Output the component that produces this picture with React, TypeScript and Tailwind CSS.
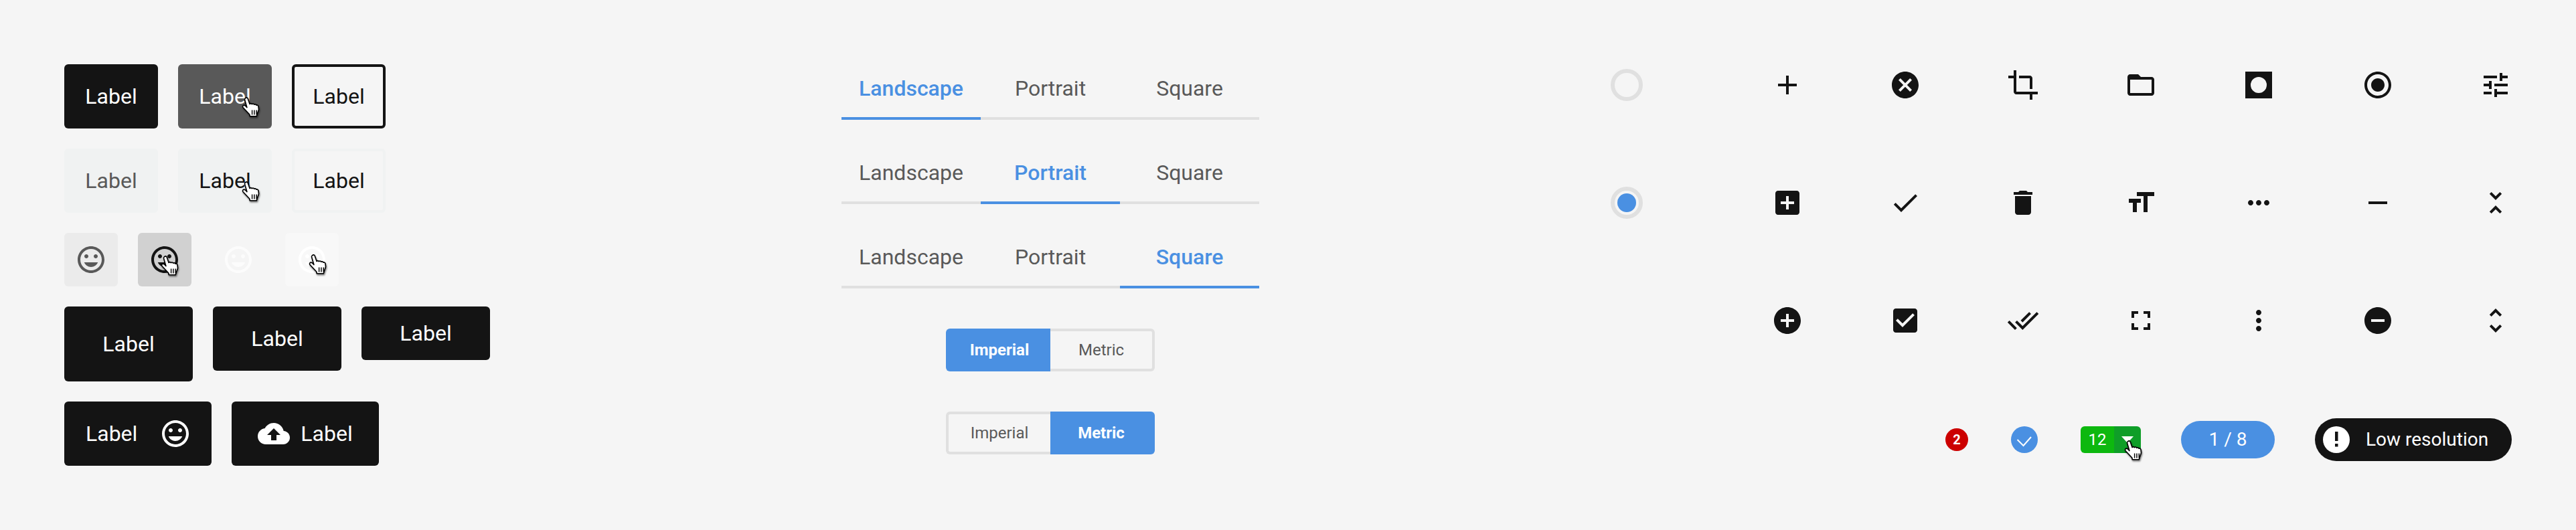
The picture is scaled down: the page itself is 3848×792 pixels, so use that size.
import React from "react";

const P = {
  mood: "M11.99 2C6.47 2 2 6.48 2 12s4.47 10 9.99 10C17.52 22 22 17.52 22 12S17.52 2 11.99 2zM12 20c-4.42 0-8-3.58-8-8s3.58-8 8-8 8 3.58 8 8-3.58 8-8 8zm3.5-9c.83 0 1.5-.67 1.5-1.5S16.33 8 15.5 8 14 8.67 14 9.5s.67 1.5 1.5 1.5zm-7 0c.83 0 1.5-.67 1.5-1.5S9.33 8 8.5 8 7 8.67 7 9.5 7.67 11 8.5 11zm3.5 6.5c2.33 0 4.31-1.46 5.11-3.5H6.89c.8 2.04 2.78 3.5 5.11 3.5z",
  upload: "M19.35 10.04C18.67 6.59 15.64 4 12 4 9.11 4 6.6 5.64 5.35 8.04 2.34 8.36 0 10.91 0 14c0 3.31 2.69 6 6 6h13c2.76 0 5-2.24 5-5 0-2.64-2.05-4.78-4.65-4.96zM14 13v4h-4v-4H7l5-5 5 5h-3z",
};

const GRID = [
  "M19 13h-6v6h-2v-6H5v-2h6V5h2v6h6v2z",
  "M12 2C6.47 2 2 6.47 2 12s4.47 10 10 10 10-4.47 10-10S17.53 2 12 2zm5 13.59L15.59 17 12 13.41 8.41 17 7 15.59 10.59 12 7 8.41 8.41 7 12 10.59 15.59 7 17 8.41 13.41 12 17 15.59z",
  "M17 15h2V7c0-1.1-.9-2-2-2H9v2h8v8zM7 17V1H5v4H1v2h4v10c0 1.1.9 2 2 2h10v4h2v-4h4v-2H7z",
  "M20 6h-8l-2-2H4c-1.1 0-1.99.9-1.99 2L2 18c0 1.1.9 2 2 2h16c1.1 0 2-.9 2-2V8c0-1.1-.9-2-2-2zm0 12H4V8h16v10z",
  "M2 2h20v20H2V2zm10 4a6 6 0 1 0 0 12 6 6 0 0 0 0-12z",
  "M12 7c-2.76 0-5 2.24-5 5s2.24 5 5 5 5-2.24 5-5-2.24-5-5-5zm0-5C6.48 2 2 6.48 2 12s4.48 10 10 10 10-4.48 10-10S17.52 2 12 2zm0 18c-4.42 0-8-3.58-8-8s3.58-8 8-8 8 3.58 8 8-3.58 8-8 8z",
  "M3 17v2h6v-2H3zM3 5v2h10V5H3zm10 16v-2h8v-2h-8v-2h-2v6h2zM7 9v2H3v2h4v2h2V9H7zm14 4v-2H11v2h10zm-6-4h2V7h4V5h-4V3h-2v6z",
  "M19 3H5c-1.11 0-2 .9-2 2v14c0 1.1.89 2 2 2h14c1.1 0 2-.9 2-2V5c0-1.1-.9-2-2-2zm-2 10h-4v4h-2v-4H7v-2h4V7h2v4h4v2z",
  "M9 16.17L4.83 12l-1.42 1.41L9 19 21 7l-1.41-1.41z",
  "M6 19c0 1.1.9 2 2 2h8c1.1 0 2-.9 2-2V7H6v12zM19 4h-3.5l-1-1h-5l-1 1H5v2h14V4z",
  "M9 4v3h5v12h3V7h5V4H9zm-6 8h3v7h3v-7h3V9H3v3z",
  "M6 10c-1.1 0-2 .9-2 2s.9 2 2 2 2-.9 2-2-.9-2-2-2zm12 0c-1.1 0-2 .9-2 2s.9 2 2 2 2-.9 2-2-.9-2-2-2zm-6 0c-1.1 0-2 .9-2 2s.9 2 2 2 2-.9 2-2-.9-2-2-2z",
  "M19 13H5v-2h14v2z",
  "M7.41 18.59L8.83 20 12 16.83 15.17 20l1.41-1.41L12 14l-4.59 4.59zm9.18-13.18L15.17 4 12 7.17 8.83 4 7.41 5.41 12 10l4.59-4.59z",
  "M12 2C6.48 2 2 6.48 2 12s4.48 10 10 10 10-4.48 10-10S17.52 2 12 2zm5 11h-4v4h-2v-4H7v-2h4V7h2v4h4v2z",
  "M19 3H5c-1.11 0-2 .9-2 2v14c0 1.1.89 2 2 2h14c1.11 0 2-.9 2-2V5c0-1.1-.89-2-2-2zm-9 14l-5-5 1.41-1.41L10 14.17l7.59-7.59L19 8l-9 9z",
  "M18 7l-1.41-1.41-6.34 6.34 1.41 1.41L18 7zm4.24-1.41L11.66 16.17 7.48 12l-1.41 1.41L11.66 19l12-12-1.42-1.41zM.41 13.41L6 19l1.41-1.41L1.83 12 .41 13.41z",
  "M7 14H5v5h5v-2H7v-3zm-2-4h2V7h3V5H5v5zm12 7h-3v2h5v-5h-2v3zM14 5v2h3v3h2V5h-5z",
  "M12 8c1.1 0 2-.9 2-2s-.9-2-2-2-2 .9-2 2 .9 2 2 2zm0 2c-1.1 0-2 .9-2 2s.9 2 2 2 2-.9 2-2-.9-2-2-2zm0 6c-1.1 0-2 .9-2 2s.9 2 2 2 2-.9 2-2-.9-2-2-2z",
  "M12 2C6.48 2 2 6.48 2 12s4.48 10 10 10 10-4.48 10-10S17.52 2 12 2zm5 11H7v-2h10v2z",
  "M12 5.83L15.17 9l1.41-1.41L12 3 7.41 7.59 8.83 9 12 5.83zm0 12.34L8.83 15l-1.41 1.41L12 21l4.59-4.59L15.17 15 12 18.17z",
];

function Icon({ d, className = "" }: { d: string; className?: string }) {
  return (
    <svg viewBox="0 0 24 24" className={`w-12 h-12 shrink-0 fill-current ${className}`} fillRule="evenodd">
      <path d={d} />
    </svg>
  );
}

function Hand({ className }: { className: string }) {
  return (
    <svg
      viewBox="1 0 25 28"
      className={`absolute w-[29px] h-[31px] drop-shadow-[1px_2px_1px_rgba(0,0,0,0.5)] ${className}`}
    >
      <path
        d="M5.5 1.5c1-1.2 2.8-.8 3.3.7l2.5 7.3c.5-1 2.3-1.2 3 .2.6-1 2.4-1 3 .5.8-.8 2.4-.6 3 .8.9-.5 2.4 0 2.7 1.5l.5 4.5-2 5.5-1 3.5H11.5l-.5-2.5L2.5 14.5c-1.3-1.5-.6-3.5 1-3.5 1.2 0 2.5 1 4 3L4.5 3.5c-.1-.8.3-1.5 1-2z"
        fill="#ffffff"
        stroke="#000000"
        strokeWidth="1.5"
        strokeLinejoin="round"
      />
      <path d="M14.5 17.5v6.5M17.5 17.5v6.5M20.5 17.5v6.5" stroke="#000000" strokeWidth="1.3" fill="none" />
    </svg>
  );
}

function Btn({ className, hand }: { className: string; hand?: boolean }) {
  return (
    <div className={`relative flex items-center justify-center w-[140px] h-24 rounded-[6px] text-[32px] font-[450] ${className}`}>
      Label
      {hand && <Hand className="left-[95px] top-[49px]" />}
    </div>
  );
}

function IconBtn({ className, hand }: { className: string; hand?: string }) {
  return (
    <div className={`relative flex items-center justify-center w-20 h-20 rounded-[6px] ${className}`}>
      <Icon d={P.mood} />
      {hand && <Hand className={hand} />}
    </div>
  );
}

function Tabs({ active }: { active: number }) {
  return (
    <div className="flex w-[624px]">
      {["Landscape", "Portrait", "Square"].map((t, i) => (
        <div
          key={t}
          className={`w-[208px] h-[71px] pb-[19px] border-b-4 text-center text-[32px] leading-[48px] ${
            i === active ? "border-[#4a90e2] text-[#4a90e2] font-medium" : "border-[#e0e0e0] text-[#595959]"
          }`}
        >
          {t}
        </div>
      ))}
    </div>
  );
}

function Segment({ active }: { active: number }) {
  const on = "bg-[#4a90e2] text-white font-bold border-[#4a90e2]";
  const off = "text-[#595959] border-[#e0e0e0]";
  return (
    <div className="flex w-[312px] h-16 text-[24px]">
      <div className={`flex items-center justify-center w-[156px] rounded-l-[6px] border-4 border-r-0 ${active === 0 ? on : off}`}>Imperial</div>
      <div className={`flex items-center justify-center w-[156px] rounded-r-[6px] border-4 border-l-0 ${active === 1 ? on : off}`}>Metric</div>
    </div>
  );
}

export default function App() {
  return (
    <div className="flex items-start w-[3848px] h-[792px] bg-[#f5f5f5] text-[#141414] font-['Roboto',sans-serif] overflow-hidden">
      <div className="ml-24 mt-24 w-[636px] flex flex-col gap-[30px] shrink-0">
        <div className="flex gap-[30px]">
          <Btn className="bg-[#141414] text-white" />
          <Btn className="bg-[#595959] text-white" hand />
          <Btn className="border-4 border-[#141414]" />
        </div>
        <div className="flex gap-[30px]">
          <Btn className="bg-[#f0f2f2] text-[#595959]" />
          <Btn className="bg-[#f0f2f2]" hand />
          <Btn className="border-4 border-[#f0f2f2]" />
        </div>
        <div className="flex gap-[30px]">
          <IconBtn className="bg-[#ebebeb] text-[#595959]" />
          <IconBtn className="bg-[#d1d1d1]" hand="left-[34px] top-[34px]" />
          <IconBtn className="text-[#fcfcfc]" />
          <IconBtn className="bg-[#f8f8f8] text-white" hand="left-[35px] top-[32px]" />
        </div>
        <div className="flex items-start gap-[30px]">
          <div className="flex items-center justify-center w-48 h-28 rounded-[6px] bg-[#141414] text-white text-[32px] font-[450]">Label</div>
          <div className="flex items-center justify-center w-48 h-24 rounded-[6px] bg-[#141414] text-white text-[32px] font-[450]">Label</div>
          <div className="flex items-center justify-center w-48 h-20 rounded-[6px] bg-[#141414] text-white text-[32px] font-[450]">Label</div>
        </div>
        <div className="flex gap-[30px]">
          <div className="flex items-center justify-between w-[220px] h-24 pl-8 pr-[30px] rounded-[6px] bg-[#141414] text-white text-[32px] font-[450]">
            Label
            <Icon d={P.mood} />
          </div>
          <div className="flex items-center justify-center gap-[16px] w-[220px] h-24 rounded-[6px] bg-[#141414] text-white text-[32px] font-[450]">
            <Icon d={P.upload} />
            Label
          </div>
        </div>
      </div>

      <div className="ml-[525px] mt-[108px] w-[624px] shrink-0 flex flex-col items-center">
        <div className="flex flex-col gap-[55px]">
          <Tabs active={0} />
          <Tabs active={1} />
          <Tabs active={2} />
        </div>
        <div className="flex flex-col gap-[60px] mt-[60px]">
          <Segment active={0} />
          <Segment active={1} />
        </div>
      </div>

      <div className="ml-[525px] mt-[103px] w-[1346px] shrink-0">
        <div className="flex">
          <div className="flex flex-col gap-32 w-12">
            <div className="w-12 h-12 rounded-full border-[6px] border-[#e0e0e0]" />
            <div className="flex items-center justify-center w-12 h-12 rounded-full border-[6px] border-[#e0e0e0]">
              <div className="w-7 h-7 rounded-full bg-[#4a90e2]" />
            </div>
          </div>
          <div className="ml-[192px] grid grid-cols-[repeat(5,48px)_50px_48px] gap-32 justify-items-end">
            {GRID.map((d) => (
              <Icon key={d} d={d} />
            ))}
          </div>
        </div>
        <div className="flex items-center justify-end mt-[122px] h-16">
          <div className="flex items-center justify-center w-[34px] h-[34px] rounded-full bg-[#cc0000] text-white text-[20px] font-bold">2</div>
          <div className="flex items-center justify-center w-10 h-10 ml-16 rounded-full bg-[#4a90e2]">
            <svg viewBox="0 0 40 40" className="w-10 h-10">
              <path d="M9.5 20l9 9L30 16" fill="none" stroke="#ffffff" strokeWidth="2" />
            </svg>
          </div>
          <div className="relative flex w-[90px] h-10 ml-16 rounded-[6px] text-white text-[24px]">
            <div className="flex items-center justify-center w-[50px] rounded-l-[6px] bg-[#0db80f]">12</div>
            <div className="flex items-center justify-center w-10 rounded-r-[6px] bg-[#0f9e28]">
              <svg viewBox="0 0 18 10" className="w-[18px] h-[10px]">
                <path d="M0 0h18L9 10z" fill="#ffffff" />
              </svg>
            </div>
            <Hand className="left-[65px] top-[21px]" />
          </div>
          <div className="flex items-center justify-center w-[140px] h-14 ml-[60px] rounded-full bg-[#4a90e2] text-white text-[28px]">1 / 8</div>
          <div className="flex items-center w-[294px] h-16 ml-[60px] pl-3 rounded-full bg-[#141414] text-white text-[28px]">
            <div className="flex items-center justify-center w-10 h-10 rounded-full bg-white">
              <svg viewBox="0 0 40 40" className="w-10 h-10">
                <path d="M18 8h4.5v14H18zM18 26h4.5v4.5H18z" fill="#141414" />
              </svg>
            </div>
            <span className="ml-6">Low resolution</span>
          </div>
        </div>
      </div>
    </div>
  );
}
